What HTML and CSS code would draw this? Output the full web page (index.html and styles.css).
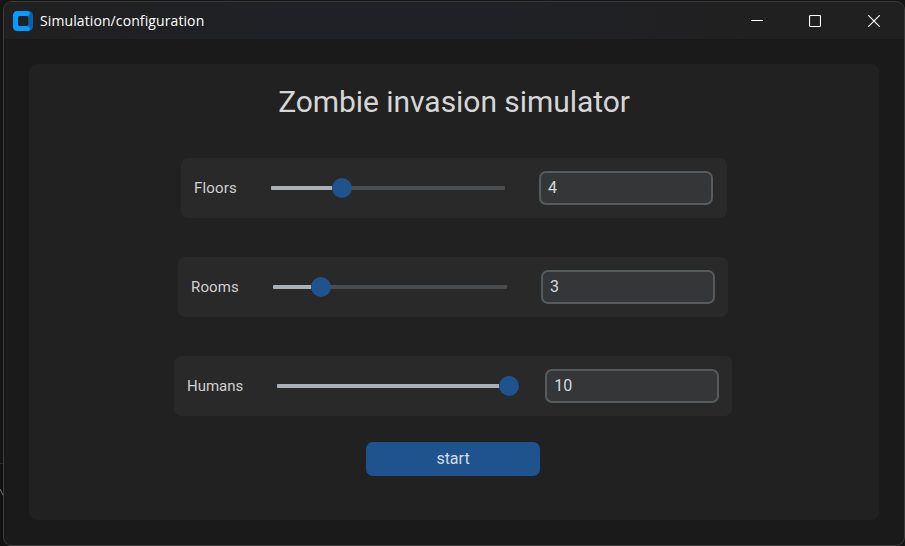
FILE: index.html
```html
<!DOCTYPE html>
<html lang="en">
<head>
<meta charset="utf-8">
<title>Simulation/configuration</title>
<link rel="stylesheet" href="styles.css">
</head>
<body>
<div class="desktop-edge"></div>
<svg class="desktop-mark" width="4" height="10" viewBox="0 0 4 10" fill="none"><path d="M0 1L3.500 8V5" stroke="#70777b"/></svg>
<div class="window">
  <header class="titlebar">
    <svg class="app-icon" width="20" height="20" viewBox="0 0 20 20">
      <rect x="3" width="17" height="20" rx="4.500" fill="#0563b1"/>
      <path d="M4.500 0H14Q17 0 17 2.500Q17 4.500 14.500 5H7Q5 5 5 7V13Q5 15 7 15H14.500Q17 15.500 17 17.500Q17 20 14 20H4.500Q0 20 0 15.500V4.500Q0 0 4.500 0Z" fill="#069bff"/>
      <rect x="5" y="5" width="10.300" height="10" rx="2" fill="#202124"/>
    </svg>
    <span class="window-title">Simulation/configuration</span>
    <div class="controls">
      <svg width="12" height="12" viewBox="0 0 12 12"><path d="M0 5.500H12" stroke="#fff"/></svg>
      <svg width="12" height="12" viewBox="0 0 12 12" fill="none"><rect x=".5" y=".5" width="11" height="11" rx="1" stroke="#fff" stroke-width="1.150"/></svg>
      <svg width="12" height="12" viewBox="0 0 12 12"><path d="M.3 .3L11.700 11.700M11.700 .3L.3 11.700" stroke="#fff" stroke-width="1.150"/></svg>
    </div>
  </header>
  <main class="panel">
    <h1>Zombie invasion simulator</h1>
    <div class="row floors">
      <span class="label">Floors</span>
      <div class="slider"><div class="fill"></div><div class="knob"></div></div>
      <div class="entry">4</div>
    </div>
    <div class="row rooms">
      <span class="label">Rooms</span>
      <div class="slider"><div class="fill"></div><div class="knob"></div></div>
      <div class="entry">3</div>
    </div>
    <div class="row humans">
      <span class="label">Humans</span>
      <div class="slider"><div class="fill"></div><div class="knob"></div></div>
      <div class="entry">10</div>
    </div>
    <button class="start">start</button>
  </main>
</div>
</body>
</html>
```
FILE: styles.css
```css
* { box-sizing: border-box; }
body {
  margin: 0;
  width: 905px;
  height: 546px;
  padding: 1px 0 0 3px;
  overflow: hidden;
  background: #151515;
  font-family: Roboto, sans-serif;
  color: #d4d9df;
}
.desktop-edge {
  position: absolute;
  left: 0;
  top: 463px;
  width: 3px;
  height: 83px;
  border-top: 1px solid #292929;
  background: #111;
}
.desktop-mark { position: absolute; left: 0; top: 488px; }
.window {
  position: relative;
  width: 902px;
  height: 545px;
  border: 1px solid #3b3b3b;
  border-radius: 9px;
  background: #1a1a1a;
  overflow: hidden;
}
.titlebar {
  display: flex;
  align-items: center;
  height: 37px;
  padding: 0 24px 0 9px;
  background: linear-gradient(90deg, #202020 0%, #202126 30%, #202126 55%, #202020 85%);
}
.window-title {
  margin-left: 7px;
  font: 14px/20px "Open Sans", sans-serif;
  letter-spacing: 0.1px;
  color: #fff;
}
.controls { display: flex; gap: 47px; margin-left: auto; }
.controls svg { display: block; }
.controls svg:first-child { margin: 0 -1px 0 1px; }
.panel {
  display: flex;
  flex-direction: column;
  align-items: center;
  width: 850px;
  height: 456px;
  margin: 25px 0 0 25px;
  border-radius: 8px;
  background: #212121;
}
h1 {
  margin: 20px 0 38px;
  font-size: 30px;
  line-height: 36px;
  font-weight: 400;
  letter-spacing: -0.05px;
  color: #d6d6d6;
}
.row {
  display: grid;
  grid-template-columns: 1fr 234px 174px;
  align-items: center;
  column-gap: 34px;
  height: 60px;
  margin-bottom: 39px;
  padding: 0 13px;
  border-radius: 7px;
  background: #292929;
}
.floors { width: 546px; padding-right: 14px; }
.rooms { width: 550px; margin-left: -2px; }
.humans { width: 558px; margin-left: -2px; margin-bottom: 26px; }
.label { font-size: 15px; line-height: 20px; color: #d0d0d0; white-space: nowrap; }
.floors .label, .rooms .label { letter-spacing: 0.15px; }
.slider {
  display: flex;
  align-items: center;
  height: 4px;
  border-radius: 1px;
  background: #4a4d50;
}
.fill { flex: none; height: 4px; border-radius: 1px 0 0 1px; background: #aab0b5; }
.floors .fill { width: 61px; }
.rooms .fill { width: 38px; }
.humans .fill { width: 222px; }
.knob { flex: none; width: 20px; height: 20px; border-radius: 50%; background: #1f538d; }
.entry {
  height: 34px;
  padding: 0 7px;
  border: 2px solid #565b5e;
  border-radius: 7px;
  background: #343638;
  font-size: 16px;
  line-height: 29px;
  color: #d4d9df;
}
.start {
  width: 174px;
  height: 34px;
  margin-left: -2px;
  padding: 1px 0;
  border: 0;
  border-radius: 7px;
  background: #1f538d;
  color: #d4dce6;
  font: 16px/32px Roboto, sans-serif;
}
```
